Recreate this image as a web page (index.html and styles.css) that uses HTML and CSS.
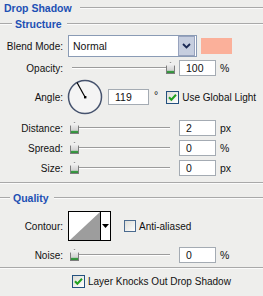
FILE: index.html
```html
<!DOCTYPE html>
<html>
<head>
    <meta charset="UTF-8">
    <title>Drop Shadow</title>
    <link rel="stylesheet" href="styles.css">
</head>
<body>
    <div class="panel">
        <div class="title-row">
            <span class="title">Drop Shadow</span>
            <span class="rule rule-title"></span>
        </div>

        <div class="group-head">
            <span class="rule rule-lead"></span>
            <span class="title group-title">Structure</span>
            <span class="rule"></span>
        </div>

        <div class="row row-blend">
            <span class="label">Blend Mode:</span>
            <div class="select">
                <span class="select-text">Normal</span>
                <span class="select-btn">
                    <svg width="9" height="6" viewBox="0 0 9 6"><path d="M1 1 L4.5 4.5 L8 1" fill="none" stroke="#1b2a55" stroke-width="1.8"/></svg>
                </span>
            </div>
            <span class="swatch"></span>
        </div>

        <div class="row row-slider row-opacity">
            <span class="label">Opacity:</span>
            <div class="slider">
                <span class="track"></span>
                <span class="thumb" style="left:98px"></span>
            </div>
            <span class="num">100</span>
            <span class="unit">%</span>
        </div>

        <div class="row row-angle">
            <span class="label">Angle:</span>
            <svg class="dial" width="36" height="36" viewBox="0 0 36 36">
                <circle cx="18" cy="18" r="16.5" fill="#f4f4f4" stroke="#46536e" stroke-width="1.5"/>
                <line x1="18" y1="18" x2="10" y2="3.5" stroke="#000" stroke-width="1.2"/>
                <rect x="17" y="17" width="2.4" height="2.4" fill="#000"/>
            </svg>
            <span class="num num-angle">119</span>
            <span class="unit unit-deg">°</span>
            <span class="check checked"></span>
            <span class="check-text">Use Global Light</span>
        </div>

        <div class="row row-slider row-distance">
            <span class="label">Distance:</span>
            <div class="slider">
                <span class="track"></span>
                <span class="thumb" style="left:2px"></span>
            </div>
            <span class="num">2</span>
            <span class="unit">px</span>
        </div>

        <div class="row row-slider">
            <span class="label">Spread:</span>
            <div class="slider">
                <span class="track"></span>
                <span class="thumb" style="left:2px"></span>
            </div>
            <span class="num">0</span>
            <span class="unit">%</span>
        </div>

        <div class="row row-slider">
            <span class="label">Size:</span>
            <div class="slider">
                <span class="track"></span>
                <span class="thumb" style="left:2px"></span>
            </div>
            <span class="num">0</span>
            <span class="unit">px</span>
        </div>

        <div class="rule rule-full rule-structure"></div>

        <div class="group-head group-quality">
            <span class="rule rule-lead rule-lead-q"></span>
            <span class="title group-title">Quality</span>
            <span class="rule"></span>
        </div>

        <div class="row row-contour">
            <span class="label">Contour:</span>
            <div class="contour">
                <svg class="contour-preview" width="31" height="28" viewBox="0 0 31 28">
                    <rect width="31" height="28" fill="#fff"/>
                    <polygon points="1,28 31,0 31,28" fill="#9d9d9d"/>
                </svg>
                <span class="contour-btn">
                    <svg width="7" height="4" viewBox="0 0 7 4"><polygon points="0,0 7,0 3.5,4" fill="#000"/></svg>
                </span>
            </div>
            <span class="check"></span>
            <span class="check-text">Anti-aliased</span>
        </div>

        <div class="row row-slider row-noise">
            <span class="label">Noise:</span>
            <div class="slider">
                <span class="track"></span>
                <span class="thumb" style="left:2px"></span>
            </div>
            <span class="num">0</span>
            <span class="unit">%</span>
        </div>

        <div class="rule rule-full rule-bottom"></div>

        <div class="row row-knock">
            <span class="check checked"></span>
            <span class="check-text">Layer Knocks Out Drop Shadow</span>
        </div>
    </div>
</body>
</html>
```

FILE: styles.css
```css
body {
    margin: 0;
    background-color: #eeeeec;
    font-family: "Liberation Sans", Arial, sans-serif;
    font-size: 10px;
    color: #111;
}
.panel {
    width: 263px;
    height: 296px;
    overflow: hidden;
}
.title {
    color: #1d50b4;
    font-weight: bold;
    font-size: 10.5px;
    white-space: nowrap;
}
.rule {
    flex: 1;
    height: 0;
    border-top: 1px solid #a9a9a9;
    border-bottom: 1px solid #fbfbfb;
}
.title-row {
    display: flex;
    align-items: center;
    height: 16px;
    padding-left: 4px;
}
.rule-title {
    margin-left: 8px;
}
.group-head {
    display: flex;
    align-items: center;
    height: 16px;
}
.rule-lead {
    flex: none;
    width: 12px;
}
.rule-lead-q {
    width: 10px;
}
.group-title {
    margin: 0 5px 0 3px;
}
.row {
    display: flex;
    align-items: center;
}
.label {
    flex: none;
    width: 63px;
    margin-right: 5px;
    text-align: right;
    white-space: nowrap;
}
.row-blend {
    height: 22px;
    margin-top: 3px;
}
.select {
    display: flex;
    align-items: center;
    width: 126px;
    height: 20px;
    border: 1px solid #8a9bb5;
    background-color: #fff;
    padding: 0 1px 0 0;
}
.select-text {
    flex: 1;
    padding-left: 4px;
    font-size: 10.5px;
}
.select-btn {
    display: flex;
    align-items: center;
    justify-content: center;
    width: 15px;
    height: 18px;
    border: 1px solid #98a3be;
    background-color: #c6cedf;
}
.swatch {
    width: 31px;
    height: 16px;
    margin-left: 4px;
    background-color: #fbb09a;
}
.row-slider {
    height: 20px;
}
.row-opacity {
    margin-top: 1px;
}
.row-distance {
    margin-top: 4px;
}
.slider {
    position: relative;
    display: flex;
    align-items: center;
    width: 104px;
    height: 20px;
}
.track {
    display: block;
    width: 98px;
    margin-left: 4px;
    height: 0;
    border-top: 1px solid #9c9c9c;
    border-bottom: 1px solid #fff;
}
.thumb {
    position: absolute;
    top: 4px;
    width: 9px;
    height: 12px;
    background: linear-gradient(#fafafa, #d2d2d2 70%, #3b9b44 75%, #2d8a37);
    clip-path: polygon(50% 0, 100% 33%, 100% 100%, 0 100%, 0 33%);
    box-shadow: inset 0 0 0 1px #7d7d7d;
}
.num {
    display: block;
    box-sizing: border-box;
    width: 37px;
    height: 16px;
    margin-left: 7px;
    padding: 2px 0 0 6px;
    border: 1px solid #a4abb3;
    background-color: #fff;
    font-size: 10.5px;
    line-height: 11px;
}
.unit {
    margin-left: 4px;
    font-size: 10.5px;
}
.row-angle {
    height: 34px;
    margin-top: 2px;
}
.dial {
    flex: none;
    margin-left: -1px;
}
.num-angle {
    width: 41px;
    margin-left: 5px;
}
.unit-deg {
    margin-left: 5px;
    align-self: flex-start;
    margin-top: 9px;
}
.check {
    flex: none;
    box-sizing: border-box;
    width: 13px;
    height: 13px;
    margin-left: 8px;
    border: 1px solid #23507f;
    background: linear-gradient(135deg, #dcdcd6, #fff);
}
.check.checked {
    background: url("data:image/svg+xml,%3Csvg xmlns='http://www.w3.org/2000/svg' width='11' height='11'%3E%3Cpath d='M2 5.2 L4.4 7.8 L9 2.8' fill='none' stroke='%2321a121' stroke-width='2'/%3E%3C/svg%3E") center no-repeat, linear-gradient(135deg, #dcdcd6, #fff);
}
.check-text {
    margin-left: 3px;
    font-size: 10px;
    white-space: nowrap;
}
.rule-full {
    flex: none;
}
.rule-structure {
    margin-top: 4px;
}
.group-quality {
    margin-top: 6px;
}
.row-contour {
    height: 30px;
    margin-top: 5px;
}
.contour {
    display: flex;
    box-sizing: border-box;
    width: 43px;
    height: 30px;
    border: 1px solid #000;
    background-color: #fff;
}
.contour-preview {
    display: block;
    border-right: 1px solid #000;
}
.contour-btn {
    flex: 1;
    display: flex;
    align-items: center;
    justify-content: center;
}
.row-contour .check {
    width: 12px;
    height: 12px;
    margin-left: 13px;
    border-color: #4a6a8e;
}
.row-noise {
    margin-top: 4px;
}
.rule-bottom {
    margin-top: 2px;
}
.row-knock {
    height: 16px;
    margin-top: 4px;
    padding-left: 64px;
}
```
